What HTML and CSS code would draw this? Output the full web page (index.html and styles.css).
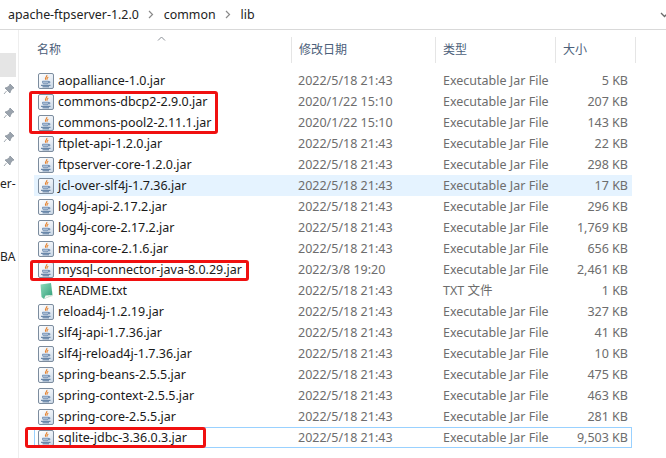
FILE: index.html
```html
<!DOCTYPE html>
<html lang="en">
<head>
    <meta charset="UTF-8">
    <meta name="viewport" content="width=device-width, initial-scale=1.0">
    <title>lib</title>
    <link rel="stylesheet" href="styles.css">
</head>
<body>
    <svg class="defs" width="0" height="0">
        <defs>
            <linearGradient id="jarbg" x1="0" y1="0" x2="1" y2="1">
                <stop offset="0" stop-color="#ffffff"/>
                <stop offset="0.55" stop-color="#e9eff6"/>
                <stop offset="1" stop-color="#c3d2e2"/>
            </linearGradient>
            <linearGradient id="txtbg" x1="0" y1="0" x2="1" y2="1">
                <stop offset="0" stop-color="#8fdcbc"/>
                <stop offset="1" stop-color="#2f9d78"/>
            </linearGradient>
            <symbol id="jar" viewBox="0 0 16 16">
                <rect x="0.5" y="0.5" width="15" height="15" rx="1.5" fill="url(#jarbg)" stroke="#7c8c9e"/>
                <path d="M8.800 2c.8 1.500-2.300 2.500-1.200 4.800M10.300 4c-1 .8-1.800 1.300-1.200 2.800" fill="none" stroke="#e5822f" stroke-width="1.100"/>
                <path d="M4.500 8.200h6v1.300c0 .9-.9 1.300-1.400 1.300H6c-.9 0-1.500-.5-1.500-1.300zM10.500 8.600h1.400v1.300h-1.400" fill="#a9bdd4" stroke="#5d7ea6" stroke-width="0.700"/>
                <path d="M3 12.300h9.500M4.500 13.800h6.500" stroke="#4d7098" stroke-width="1"/>
            </symbol>
            <symbol id="txt" viewBox="0 0 16 16">
                <path d="M2.500 1.500L13 0l1.500 12L6 16l-2.500-2z" fill="url(#txtbg)"/>
                <path d="M6 16l8.500-4L13.500 5l1.500 8z" fill="#dde3d6"/>
                <path d="M6 16l8-4-6.500.5z" fill="#f4f6f0"/>
            </symbol>
            <symbol id="pin" viewBox="0 0 12 12">
                <path d="M7 1l4 4-1.500.5L7.500 8 7 10 2 5l2-.5 2.500-2zM3.500 8L1 11" fill="#9aa3ad" stroke="#8a939d" stroke-width="0.800"/>
            </symbol>
        </defs>
    </svg>

    <div class="crumbs">
        <span>apache-ftpserver-1.2.0</span>
        <svg class="sep" width="6" height="9" viewBox="0 0 6 9"><path d="M1 1l3.500 3.500L1 8" fill="none" stroke="#8a8a8a" stroke-width="1.200"/></svg>
        <span>common</span>
        <svg class="sep" width="6" height="9" viewBox="0 0 6 9"><path d="M1 1l3.500 3.500L1 8" fill="none" stroke="#8a8a8a" stroke-width="1.200"/></svg>
        <span>lib</span>
        <svg class="drop" width="9" height="6" viewBox="0 0 9 6"><path d="M1 1l3.500 3.500L8 1" fill="none" stroke="#6a6a6a" stroke-width="1.300"/></svg>
    </div>

    <div class="main">
        <div class="side">
            <div class="side-active"></div>
            <svg class="pin"><use href="#pin"/></svg>
            <svg class="pin"><use href="#pin"/></svg>
            <svg class="pin"><use href="#pin"/></svg>
            <svg class="pin"><use href="#pin"/></svg>
            <div class="side-text">er-</div>
            <div class="side-text ba">BA</div>
        </div>
        <div class="list">
            <div class="head">
                <div class="hcol hname">名称
                    <svg class="sort" width="9" height="5" viewBox="0 0 9 5"><path d="M1 4.500L4.500 1 8 4.500" fill="none" stroke="#8a8f96" stroke-width="1"/></svg>
                </div>
                <div class="hcol">修改日期</div>
                <div class="hcol">类型</div>
                <div class="hcol">大小</div>
            </div>
            <div class="rows">
                <div class="row"><svg class="ico"><use href="#jar"/></svg><span class="name">aopalliance-1.0.jar</span><span class="cell">2022/5/18 21:43</span><span class="cell">Executable Jar File</span><span class="cell size">5 KB</span></div>
                <div class="row"><svg class="ico"><use href="#jar"/></svg><span class="name">commons-dbcp2-2.9.0.jar</span><span class="cell">2020/1/22 15:10</span><span class="cell">Executable Jar File</span><span class="cell size">207 KB</span></div>
                <div class="row"><svg class="ico"><use href="#jar"/></svg><span class="name">commons-pool2-2.11.1.jar</span><span class="cell">2020/1/22 15:10</span><span class="cell">Executable Jar File</span><span class="cell size">143 KB</span></div>
                <div class="row"><svg class="ico"><use href="#jar"/></svg><span class="name">ftplet-api-1.2.0.jar</span><span class="cell">2022/5/18 21:43</span><span class="cell">Executable Jar File</span><span class="cell size">22 KB</span></div>
                <div class="row"><svg class="ico"><use href="#jar"/></svg><span class="name">ftpserver-core-1.2.0.jar</span><span class="cell">2022/5/18 21:43</span><span class="cell">Executable Jar File</span><span class="cell size">298 KB</span></div>
                <div class="row hover"><svg class="ico"><use href="#jar"/></svg><span class="name">jcl-over-slf4j-1.7.36.jar</span><span class="cell">2022/5/18 21:43</span><span class="cell">Executable Jar File</span><span class="cell size">17 KB</span></div>
                <div class="row"><svg class="ico"><use href="#jar"/></svg><span class="name">log4j-api-2.17.2.jar</span><span class="cell">2022/5/18 21:43</span><span class="cell">Executable Jar File</span><span class="cell size">296 KB</span></div>
                <div class="row"><svg class="ico"><use href="#jar"/></svg><span class="name">log4j-core-2.17.2.jar</span><span class="cell">2022/5/18 21:43</span><span class="cell">Executable Jar File</span><span class="cell size">1,769 KB</span></div>
                <div class="row"><svg class="ico"><use href="#jar"/></svg><span class="name">mina-core-2.1.6.jar</span><span class="cell">2022/5/18 21:43</span><span class="cell">Executable Jar File</span><span class="cell size">656 KB</span></div>
                <div class="row"><svg class="ico"><use href="#jar"/></svg><span class="name">mysql-connector-java-8.0.29.jar</span><span class="cell">2022/3/8 19:20</span><span class="cell">Executable Jar File</span><span class="cell size">2,461 KB</span></div>
                <div class="row"><svg class="ico"><use href="#txt"/></svg><span class="name">README.txt</span><span class="cell">2022/5/18 21:43</span><span class="cell">TXT 文件</span><span class="cell size">1 KB</span></div>
                <div class="row"><svg class="ico"><use href="#jar"/></svg><span class="name">reload4j-1.2.19.jar</span><span class="cell">2022/5/18 21:43</span><span class="cell">Executable Jar File</span><span class="cell size">327 KB</span></div>
                <div class="row"><svg class="ico"><use href="#jar"/></svg><span class="name">slf4j-api-1.7.36.jar</span><span class="cell">2022/5/18 21:43</span><span class="cell">Executable Jar File</span><span class="cell size">41 KB</span></div>
                <div class="row"><svg class="ico"><use href="#jar"/></svg><span class="name">slf4j-reload4j-1.7.36.jar</span><span class="cell">2022/5/18 21:43</span><span class="cell">Executable Jar File</span><span class="cell size">10 KB</span></div>
                <div class="row"><svg class="ico"><use href="#jar"/></svg><span class="name">spring-beans-2.5.5.jar</span><span class="cell">2022/5/18 21:43</span><span class="cell">Executable Jar File</span><span class="cell size">475 KB</span></div>
                <div class="row"><svg class="ico"><use href="#jar"/></svg><span class="name">spring-context-2.5.5.jar</span><span class="cell">2022/5/18 21:43</span><span class="cell">Executable Jar File</span><span class="cell size">463 KB</span></div>
                <div class="row"><svg class="ico"><use href="#jar"/></svg><span class="name">spring-core-2.5.5.jar</span><span class="cell">2022/5/18 21:43</span><span class="cell">Executable Jar File</span><span class="cell size">281 KB</span></div>
                <div class="row focus"><svg class="ico"><use href="#jar"/></svg><span class="name">sqlite-jdbc-3.36.0.3.jar</span><span class="cell">2022/5/18 21:43</span><span class="cell">Executable Jar File</span><span class="cell size">9,503 KB</span></div>
            </div>
        </div>
    </div>

    <div class="mark mark-a"></div>
    <div class="mark mark-b"></div>
    <div class="mark mark-c"></div>
</body>
</html>
```

FILE: styles.css
```css
html, body {
    margin: 0;
    height: 458px;
    overflow: hidden;
    background: #fff;
}
body {
    position: relative;
    font-family: "Noto Sans", "Noto Sans CJK SC", sans-serif;
    font-size: 12px;
    color: #1a1a1a;
}
.defs {
    position: absolute;
}
.crumbs {
    height: 29px;
    border-bottom: 1px solid #d9d9d9;
    display: flex;
    align-items: center;
    padding-left: 8px;
    gap: 9.500px;
    font-size: 12.4px;
    color: #222;
}
.drop {
    margin-left: auto;
    margin-right: -3px;
}
.main {
    display: flex;
    height: 428px;
}
.side {
    width: 19px;
    box-sizing: border-box;
    border-right: 1px solid #eee;
    padding-top: 23px;
    overflow: hidden;
    display: flex;
    flex-direction: column;
    color: #222;
}
.side-active {
    width: 16px;
    height: 24px;
    background: #e5e5e5;
    margin-bottom: 6px;
}
.pin {
    width: 12px;
    height: 12px;
    margin: 0 0 12px 3px;
}
.side-text {
    margin-top: -3px;
    line-height: 16px;
    white-space: nowrap;
}
.side-text.ba {
    margin-top: 57px;
}
.list {
    flex: 1;
    min-width: 0;
}
.head {
    display: grid;
    grid-template-columns: 273px 144px 120px 80px;
    height: 26px;
    margin-top: 7px;
    margin-bottom: 7px;
}
.hcol {
    border-right: 1px solid #e5e5e5;
    padding-left: 7px;
    line-height: 26px;
    color: #4c607a;
    position: relative;
}
.hname {
    padding-left: 18px;
}
.sort {
    position: absolute;
    left: 138px;
    top: -1px;
}
.row {
    display: grid;
    grid-template-columns: 16px 244px 145px 110px 75px;
    height: 21px;
    box-sizing: border-box;
    width: 598px;
    margin-left: 15px;
    padding-left: 4px;
    align-items: center;
    line-height: 21px;
    font-size: 12.5px;
    color: #6d6d6d;
    white-space: nowrap;
}
.row.hover {
    background: #e5f3ff;
}
.row.focus {
    outline: 1px solid #99d1ff;
    outline-offset: -1px;
}
.ico {
    width: 16px;
    height: 16px;
}
.name {
    padding-left: 4px;
    color: #1a1a1a;
}
.size {
    text-align: right;
}
.mark {
    position: absolute;
    border: 3px solid #f01010;
    border-radius: 3px;
    box-sizing: border-box;
}
.mark-a {
    left: 29px;
    top: 91px;
    width: 189px;
    height: 43px;
}
.mark-b {
    left: 30px;
    top: 260px;
    width: 219px;
    height: 21px;
}
.mark-c {
    left: 25px;
    top: 427px;
    width: 181px;
    height: 21px;
}
```
